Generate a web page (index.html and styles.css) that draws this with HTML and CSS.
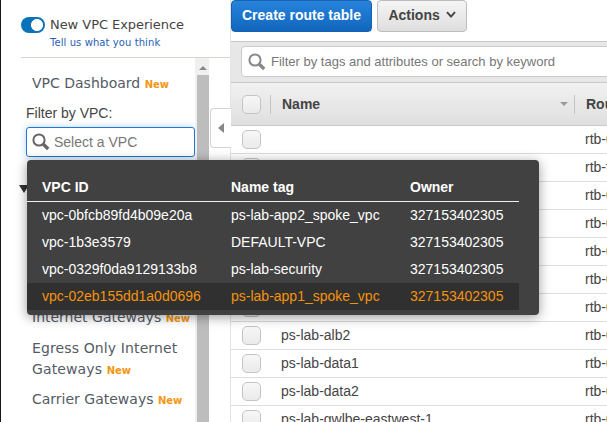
FILE: index.html
```html
<!DOCTYPE html>
<html lang="en">
<head>
<meta charset="utf-8">
<title>Route tables</title>
<link rel="stylesheet" href="styles.css">
</head>
<body>
<div class="app">
  <aside class="sidebar">
    <header class="experience">
      <span class="toggle"></span>
      <div>
        <div class="experience-title">New VPC Experience</div>
        <a class="feedback">Tell us what you think</a>
      </div>
    </header>
    <div class="side-body">
      <nav class="nav">
        <div class="nav-link">VPC Dashboard <b class="new">New</b></div>
        <div class="filter-label">Filter by VPC:</div>
        <div class="vpc-select">
          <svg class="search-icon" viewBox="0 0 18 18"><circle cx="7" cy="7" r="5.6"/><path d="M11.3 11.3 16.2 16"/></svg>
          <span>Select a VPC</span>
        </div>
        <div class="section-arrow"></div>
        <div class="nav-link gateways">Internet Gateways <b class="new">New</b></div>
        <div class="nav-link egress">Egress Only Internet Gateways <b class="new">New</b></div>
        <div class="nav-link">Carrier Gateways <b class="new">New</b></div>
      </nav>
      <div class="scrollbar"><i class="scroll-up"></i><i class="thumb"></i></div>
    </div>
    <div class="collapse"><i></i></div>
  </aside>
  <main class="main">
    <div class="actions">
      <button class="btn primary">Create route table</button>
      <button class="btn">Actions <svg class="chevron" viewBox="0 0 10 8"><path d="M1 1.2 5 5.6 9 1.2"/></svg></button>
    </div>
    <div class="filter-bar">
      <div class="filter-input">
        <svg class="search-icon" viewBox="0 0 18 18"><circle cx="7" cy="7" r="5.6"/><path d="M11.3 11.3 16.2 16"/></svg>
        <span>Filter by tags and attributes or search by keyword</span>
      </div>
    </div>
    <div class="row head">
      <i class="check"></i><span class="name">Name</span><i class="sort"></i><span class="rtb">Route</span>
    </div>
    <div class="row"><i class="check"></i><span class="name"></span><span class="rtb">rtb-0</span></div>
    <div class="row"><i class="check"></i><span class="name"></span><span class="rtb">rtb-f</span></div>
    <div class="row"><i class="check"></i><span class="name"></span><span class="rtb">rtb-0</span></div>
    <div class="row"><i class="check"></i><span class="name"></span><span class="rtb">rtb-0</span></div>
    <div class="row"><i class="check"></i><span class="name"></span><span class="rtb">rtb-0</span></div>
    <div class="row"><i class="check"></i><span class="name"></span><span class="rtb">rtb-0</span></div>
    <div class="row"><i class="check"></i><span class="name"></span><span class="rtb">rtb-0</span></div>
    <div class="row"><i class="check"></i><span class="name">ps-lab-alb2</span><span class="rtb">rtb-0</span></div>
    <div class="row"><i class="check"></i><span class="name">ps-lab-data1</span><span class="rtb">rtb-0</span></div>
    <div class="row"><i class="check"></i><span class="name">ps-lab-data2</span><span class="rtb">rtb-0</span></div>
    <div class="row"><i class="check"></i><span class="name">ps-lab-gwlbe-eastwest-1</span><span class="rtb">rtb-0</span></div>
  </main>
  <div class="popover">
    <div class="option labels"><span>VPC ID</span><span>Name tag</span><span>Owner</span></div>
    <div class="option"><span>vpc-0bfcb89fd4b09e20a</span><span>ps-lab-app2_spoke_vpc</span><span>327153402305</span></div>
    <div class="option"><span>vpc-1b3e3579</span><span>DEFAULT-VPC</span><span>327153402305</span></div>
    <div class="option"><span>vpc-0329f0da9129133b8</span><span>ps-lab-security</span><span>327153402305</span></div>
    <div class="option active"><span>vpc-02eb155dd1a0d0696</span><span>ps-lab-app1_spoke_vpc</span><span>327153402305</span></div>
  </div>
</div>
</body>
</html>
```
FILE: styles.css
```css
* { box-sizing: border-box; }
body { margin: 0; overflow: hidden; font: 14px "Liberation Sans", Arial, sans-serif; color: #444; background: #fff; }
.app { position: relative; display: flex; width: 607px; height: 422px; overflow: hidden; border-left: 1px solid #101810; }

.sidebar { position: relative; flex: none; display: flex; flex-direction: column; width: 230px; border-right: 1px solid #e4e4e4; font-family: "DejaVu Sans", Verdana, sans-serif; }
.experience { display: flex; gap: 5px; height: 58px; margin-left: 20px; padding-top: 17px; border-bottom: 1px solid #d5d5cc; }
.toggle { width: 24px; height: 16px; border-radius: 8px; background: radial-gradient(circle at 16px 8px, #fff 5.6px, #0972b8 6.4px); }
.experience-title { font-size: 13px; line-height: 16px; letter-spacing: -.05px; white-space: nowrap; }
.feedback { display: block; font-size: 10px; line-height: 12px; margin-top: 4px; letter-spacing: .08px; color: #2861b8; white-space: nowrap; }
.side-body { display: flex; flex: 1; min-height: 0; }
.nav { width: 194px; padding-top: 15px; overflow: hidden; }
.nav-link { margin: 0 0 10px 31px; font-size: 14px; line-height: 20.5px; color: #545b64; }
.nav-link.egress { margin-top: 11px; letter-spacing: .12px; }
.new { font-size: 10px; line-height: 0; letter-spacing: 0; color: #f39612; }
.filter-label { margin: -1px 0 4px 25px; font: 14px/20px "Liberation Sans", Arial, sans-serif; }
.vpc-select { display: flex; align-items: center; gap: 4px; width: 169px; height: 30px; margin-left: 25px; padding-left: 5px; border: 1px solid #1f78d1; border-radius: 3px; box-shadow: 0 0 7px #b3d4f5; color: #777; font: 14px "Liberation Sans", Arial, sans-serif; }
.search-icon { flex: none; width: 18px; height: 18px; fill: none; stroke: #666; stroke-width: 2; }
.search-icon path { stroke-width: 3.4; }
.section-arrow { width: 10px; margin: 28px 0 0 18px; border: 5px solid transparent; border-top: 8px solid #333; border-bottom: 0; }
.nav-link.gateways { margin-top: 114px; }
.scrollbar { width: 14px; background: #f0f0f0; display: flex; flex-direction: column; align-items: center; }
.scroll-up { margin: 8px 0 6px 2px; border: 4px solid transparent; border-bottom-color: #888; border-top: 0; }
.thumb { width: 12px; flex: 1; margin-left: 2px; margin-top: -1px; background: #bdbdbd; }
.collapse { position: absolute; left: 209px; top: 108px; width: 21px; height: 40px; padding: 14px 0 0 7px; background: #fff; border: 1px solid #d4d4d4; border-right: 0; border-radius: 4px 0 0 4px; }
.collapse i { display: block; width: 6px; border: 5px solid transparent; border-right: 6px solid #888; border-left: 0; }

.main { flex: 1; min-width: 0; }
.actions { display: flex; gap: 5px; height: 42px; border-bottom: 1px solid #c8c8c8; }
.btn { width: 90px; height: 32px; padding: 0 10px 2px; border: 1px solid #bcbcbc; border-radius: 4px; background: linear-gradient(#f5f5f5, #dedede); color: #444; font: bold 14px "Liberation Sans", Arial, sans-serif; white-space: nowrap; }
.primary { width: 141px; color: #fff; background: linear-gradient(#2683dc, #1166bd); border-color: #1761ae; }
.chevron { width: 10px; height: 8px; margin: 0 0 1px 2px; fill: none; stroke: #444; stroke-width: 2; }
.filter-bar { height: 41px; padding: 4px 0 0 10px; background: #e7e7e7; border-bottom: 1px solid #c8c8c8; overflow: hidden; }
.filter-input { display: flex; align-items: center; gap: 5px; width: 400px; height: 31px; padding-left: 6px; border: 1px solid #ccc; border-radius: 4px; background: #fff; color: #777; }
.filter-input .search-icon { stroke: #888; }
.filter-input span { font-size: 13px; white-space: nowrap; }
.row { display: flex; align-items: center; height: 28px; padding-left: 11px; border-bottom: 1px solid #ddd; white-space: nowrap; }
.row > * { flex: none; }
.check { width: 19px; height: 19px; border: 1px solid #c4c4c4; border-radius: 5px; background: linear-gradient(#f7f7f7, #eaeaea); }
.name { width: 285px; margin-left: 20px; padding-bottom: 1px; }
.rtb { margin-left: 19px; padding-bottom: 1px; }
.head { height: 43px; font-weight: bold; background: linear-gradient(#f1f1f1, #dfdfdf); border-color: #c8c8c8; }
.head .name { width: 290px; margin-left: 9px; padding-left: 11px; border-left: 1px solid #c4c4c4; line-height: 18px; }
.sort { width: 8px; border: 4px solid transparent; border-top-color: #999; border-bottom: 0; }
.head .rtb { margin-left: 6px; padding-left: 11px; border-left: 1px solid #c4c4c4; line-height: 18px; }

.popover { position: absolute; left: 26px; top: 160px; width: 512px; height: 155px; padding: 14px 20px 0 0; border-radius: 4px; background: #414141; box-shadow: 0 2px 12px rgba(0,0,0,.4); color: #fff; }
.option { display: grid; grid-template-columns: 189px 179px 1fr; align-items: center; height: 27px; padding: 0 0 2px 15px; white-space: nowrap; }
.labels { height: 28px; border-bottom: 1px solid #eee; font-weight: bold; }
.active { background: #303030; color: #f5930b; }
```
